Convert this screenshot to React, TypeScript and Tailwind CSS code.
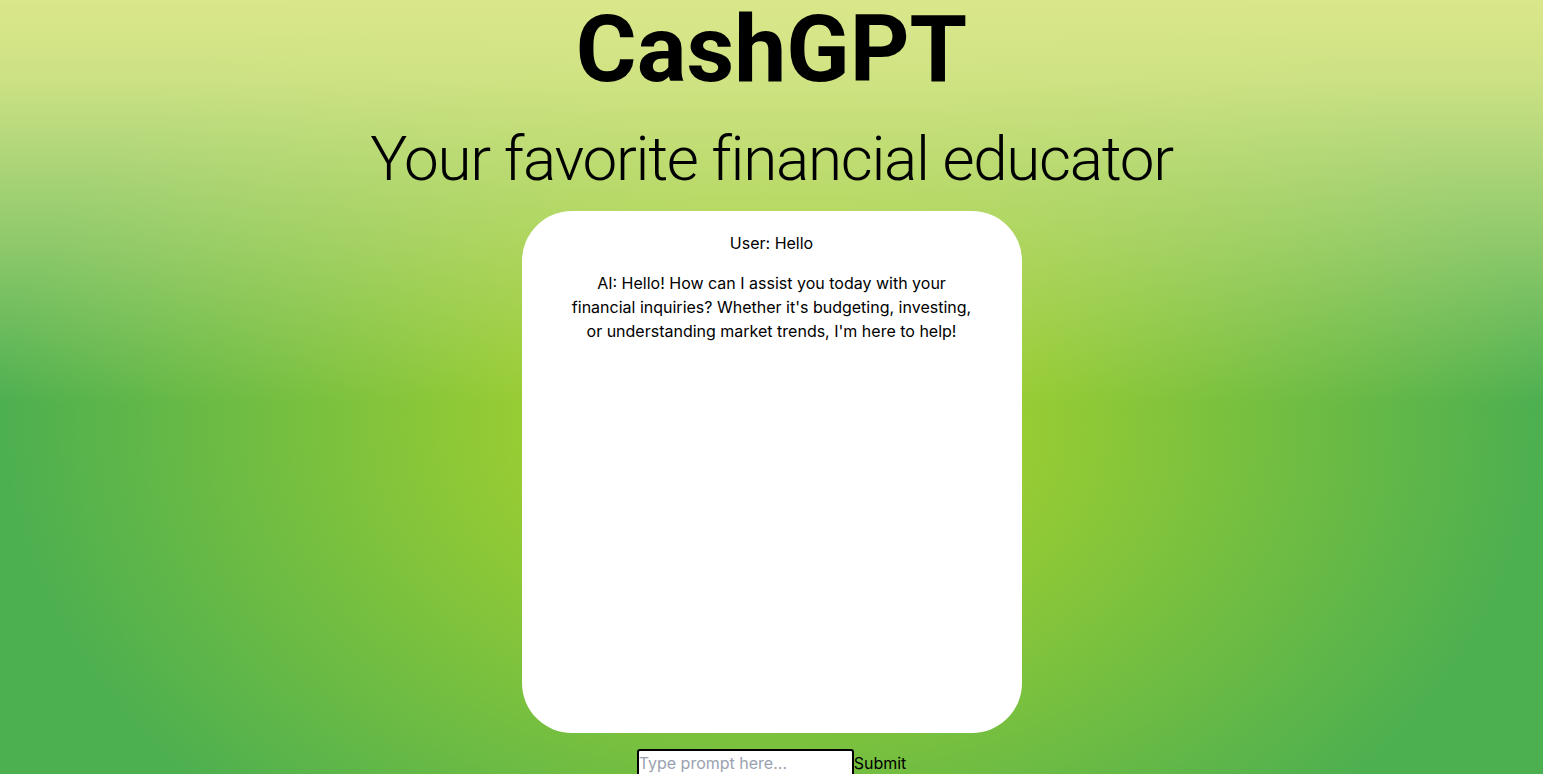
import React, { useState } from 'react';

export default function App() {
  const [prompt, setPrompt] = useState('');
  const [messages] = useState([
    { role: 'User', text: 'Hello' },
    {
      role: 'AI',
      text: "Hello! How can I assist you today with your financial inquiries? Whether it's budgeting, investing, or understanding market trends, I'm here to help!",
    },
  ]);

  return (
    <div className="min-h-screen bg-[image:linear-gradient(to_bottom,rgba(218,231,138,1)_0%,rgba(218,231,138,0.9)_10%,rgba(218,231,138,0.45)_32%,rgba(218,231,138,0)_52%),radial-gradient(ellipse_50%_70%_at_50%_55%,#a0ce38_0%,#9acd32_30%,#4caf50_100%)] flex flex-col items-center font-['Inter',sans-serif]">
      {/* Header */}
      <h1 className="mt-[3px] text-[93px] leading-none font-bold text-black font-['Roboto',sans-serif]">
        CashGPT
      </h1>
      <h2 className="mt-[32px] text-[62px] leading-none font-light tracking-[-1.3px] text-black font-['Roboto',sans-serif]">
        Your favorite financial educator
      </h2>

      {/* Chat window */}
      <div className="mt-[21px] w-[500px] h-[522px] bg-white rounded-[50px] px-12 pt-5 text-center text-base leading-6 text-black">
        {messages.map((m, i) => (
          <p key={i} className="mb-4">
            {m.role}: {m.text}
          </p>
        ))}
      </div>

      {/* Prompt */}
      <form className="mt-4 flex items-center" onSubmit={(e) => e.preventDefault()}>
        <input
          value={prompt}
          onChange={(e) => setPrompt(e.target.value)}
          placeholder="Type prompt here..."
          className="w-[217px] h-[28px] border-2 border-black rounded-[3px] bg-white px-0 text-base text-black placeholder:text-gray-400"
        />
        <button type="submit" className="text-base text-black leading-6">
          Submit
        </button>
      </form>
    </div>
  );
}
